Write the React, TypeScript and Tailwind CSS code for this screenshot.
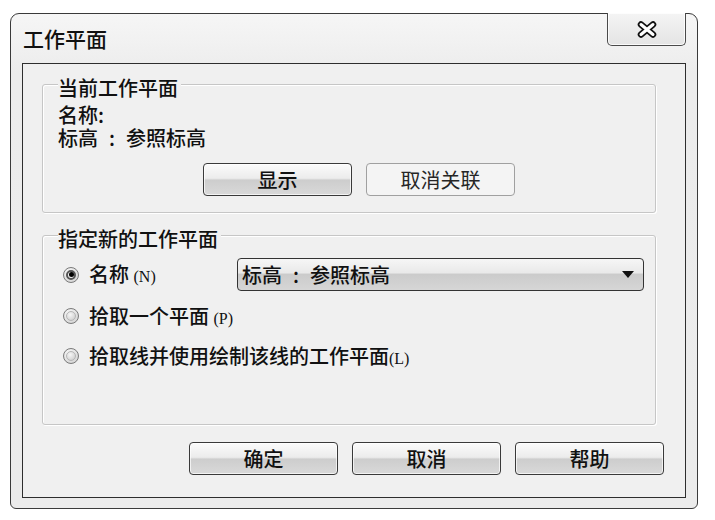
import React from 'react';

const btn =
  'w-[149px] h-[33px] rounded-[4px] border border-[#3a3a3a] bg-[linear-gradient(to_bottom,#fbfbfb_0%,#ececec_46%,#cdcdcd_52%,#d9d9d9_100%)] shadow-[inset_0_0_0_1px_rgba(255,255,255,0.7)] flex items-center justify-center text-[20px] leading-none text-[#111]';

function Radio({ checked }: { checked?: boolean }) {
  return (
    <span className="w-[16px] h-[16px] rounded-full border border-[#7a7a7a] bg-[radial-gradient(circle_at_40%_35%,#ffffff_0%,#d0d0d0_85%)] flex items-center justify-center shrink-0">
      {checked ? (
        <span className="w-[10px] h-[10px] rounded-full border-[2px] border-[#555] bg-[#f4f4f4] flex items-center justify-center">
          <span className="w-[5px] h-[5px] rounded-full bg-[#000]" />
        </span>
      ) : (
        <span className="w-[10px] h-[10px] rounded-full border border-[#b5b5b5] bg-[radial-gradient(circle_at_40%_35%,#f6f6f6_0%,#c8c8c8_100%)]" />
      )}
    </span>
  );
}

function Colon() {
  return <span className="inline-block w-[28px] text-center">:</span>;
}

function Group({ title, className, children }: { title: string; className?: string; children: React.ReactNode }) {
  return (
    <div
      className={`w-[614px] rounded-[3px] border border-[#c6c6c6] shadow-[inset_1px_1px_0_#ffffff,1px_1px_0_#ffffff] flex flex-col pl-[15px] ${className ?? ''}`}
    >
      <span className="-mt-[8px] self-start bg-[#f0f0f0] pr-[3px] text-[20px] leading-[22px] text-[#111]">{title}</span>
      {children}
    </div>
  );
}

export default function App() {
  return (
    <div
      className="w-[715px] h-[520px] bg-white pt-[13px] pl-[10px] font-medium"
      style={{ fontFamily: '"Noto Sans CJK SC", "Noto Sans", sans-serif' }}
    >
      <div className="w-[688px] h-[496px] border border-[#3a3a3a] rounded-t-[9px] rounded-b-[6px] bg-[linear-gradient(to_bottom,#f6f6f6_0%,#ececec_12%,#ebebeb_100%)] flex flex-col px-[11px] pb-[10px]">
        {/* title bar */}
        <div className="h-[49px] shrink-0 flex items-start justify-between">
          <span className="mt-[13px] pl-[1px] text-[21px] leading-[22px] text-[#111]">工作平面</span>
          <div className="-mt-[1px] w-[79px] h-[33px] border border-t-0 border-[#4a4a4a] rounded-b-[5px] bg-[linear-gradient(to_bottom,#f4f4f4,#e4e4e4)] shadow-[inset_0_0_0_1px_rgba(255,255,255,0.8)] flex items-center justify-center">
            <svg width="20" height="17" viewBox="0 0 20 17">
              <g strokeLinecap="round">
                <line x1="4" y1="3.5" x2="16" y2="13.5" stroke="#111" strokeWidth="6.5" />
                <line x1="16" y1="3.5" x2="4" y2="13.5" stroke="#111" strokeWidth="6.5" />
                <line x1="4" y1="3.5" x2="16" y2="13.5" stroke="#fff" strokeWidth="3" />
                <line x1="16" y1="3.5" x2="4" y2="13.5" stroke="#fff" strokeWidth="3" />
              </g>
            </svg>
          </div>
        </div>

        {/* client area */}
        <div className="flex-1 border border-[#2e2e2e] bg-[#f0f0f0] flex flex-col pl-[19px] pr-[21px]">
          <Group title="当前工作平面" className="mt-[20px] h-[129px]">
            <span className="mt-[5px] text-[20px] leading-[22px] text-[#111]">名称:</span>
            <span className="mt-[1px] text-[20px] leading-[22px] text-[#111]">
              标高<Colon />参照标高
            </span>
            <div className="mt-[14px] ml-[145px] flex gap-[14px]">
              <div className={btn}>显示</div>
              <div className="w-[149px] h-[33px] rounded-[4px] border border-[#a0a0a0] bg-[#f4f4f4] flex items-center justify-center text-[20px] leading-none text-[#262626] font-normal">
                取消关联
              </div>
            </div>
          </Group>

          <Group title="指定新的工作平面" className="mt-[22px] h-[190px]">
            <div className="mt-[8px] h-[33px] flex items-center">
              <div className="w-[179px] flex items-center gap-[10px] pl-[5px]">
                <Radio checked />
                <span className="text-[20px] leading-none text-[#111]">
                  名称 <span className="text-[16px]" style={{ fontFamily: '"Liberation Serif", serif' }}>(N)</span>
                </span>
              </div>
              <div className="w-[407px] h-[33px] rounded-[4px] border border-[#333] bg-[linear-gradient(to_bottom,#f6f6f6_0%,#e9e9e9_44%,#cbcbcb_50%,#d6d6d6_100%)] flex items-center justify-between pl-[4px] pr-[9px]">
                <span className="text-[20px] leading-none text-[#111]">
                  标高<Colon />参照标高
                </span>
                <svg width="12" height="8" viewBox="0 0 12 8">
                  <path d="M0 0 H12 L6 7 Z" fill="#111" />
                </svg>
              </div>
            </div>
            <div className="mt-[13px] h-[24px] flex items-center gap-[10px] pl-[5px]">
              <Radio />
              <span className="text-[20px] leading-none text-[#111]">
                拾取一个平面 <span className="text-[16px]" style={{ fontFamily: '"Liberation Serif", serif' }}>(P)</span>
              </span>
            </div>
            <div className="mt-[16px] h-[24px] flex items-center gap-[10px] pl-[5px]">
              <Radio />
              <span className="text-[20px] leading-none text-[#111]">
                拾取线并使用绘制该线的工作平面<span className="text-[16px]" style={{ fontFamily: '"Liberation Serif", serif' }}>(L)</span>
              </span>
            </div>
          </Group>

          <div className="mt-[17px] flex justify-end gap-[14px]">
            <div className={btn}>确定</div>
            <div className={btn}>取消</div>
            <div className={btn}>帮助</div>
          </div>
        </div>
      </div>
    </div>
  );
}
